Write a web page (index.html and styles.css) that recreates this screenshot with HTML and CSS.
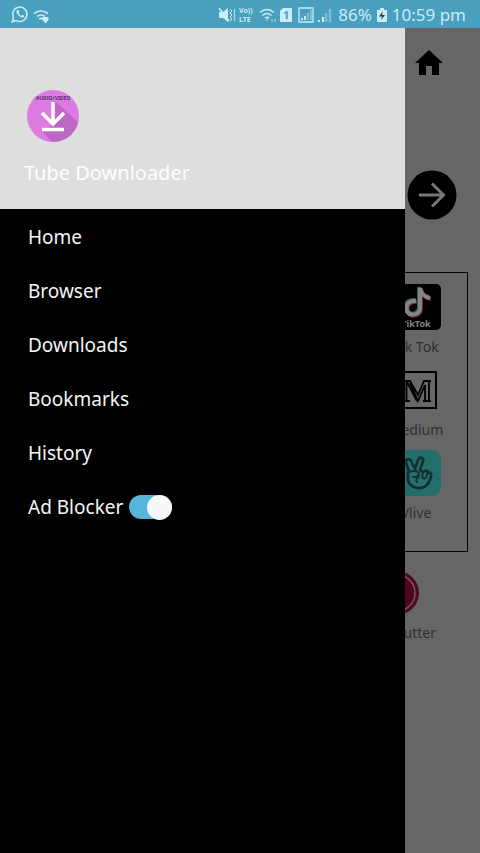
FILE: index.html
```html
<!DOCTYPE html>
<html lang="en">
<head>
<meta charset="utf-8">
<meta name="viewport" content="width=device-width, initial-scale=1">
<title>Tube Downloader</title>
<link rel="stylesheet" href="styles.css">
</head>
<body>
<header class="status">
  <svg class="status-left" width="40" height="20" viewBox="0 0 40 20" fill="none" stroke="currentColor" aria-hidden="true">
    <path d="M2.200 16.800 3.400 12.600A7.200 7.200 0 1 1 6.300 15.600Z" stroke-width="1.500"/>
    <path d="M7.300 5c-1.300.9-1.200 2.700.4 4.600s3.600 3.400 5.300 2.900c1.500-.5 1.600-1.700 1-2l-1.500-.7-1.200 1c-1.200-.5-2.200-1.500-2.700-2.600l.8-1-.7-2Z" fill="currentColor" stroke="none"/>
    <path d="M24 8.500q7-5 14 0M27 11.500q4-3 8 0M29 14q2-1.400 4 0" stroke-width="1.700"/>
    <path d="M32.500 12h6v3l-3 3.500-3-3.500Z" fill="currentColor" stroke="none"/>
  </svg>
  <div class="status-right">
    <svg width="116" height="20" viewBox="0 0 116 20" fill="none" stroke="currentColor" aria-hidden="true">
      <path d="M1 7h4l5-4v14l-5-4H1Z" fill="currentColor" stroke="none"/>
      <path d="m1 3 10 13" stroke-width="1.500"/>
      <path d="m12 4 2 2-2 2 2 2-2 2 2 2-2 2M16 4l1 2-1 2 1 2-1 2 1 2-1 2" stroke-width="1"/>
      <g fill="currentColor" stroke="none" class="lte"><text x="21" y="8">Vo))</text><text x="21" y="17">LTE</text></g>
      <path d="M42 7.500q7-6 14 0M44.500 10.500q4.500-4 9 0M47 13.300q2-1.800 4 0" stroke-width="1.600"/>
      <path d="M48 15h2M54 14v3m3-3v3" stroke-width="1.500" opacity=".5"/>
      <path d="M62 6l3-3h9v14H62Z" fill="currentColor" stroke="none"/>
      <text x="65" y="14" class="sim">1</text>
      <path d="M81 3h14v14H81Z" stroke-width="1.300"/>
      <path d="M84 15v-2m3 2v-4" stroke-width="2"/><path d="M90 15V8m3 7V5" stroke-width="2" opacity=".4"/>
      <path d="M101 17v-2m4 2v-5" stroke-width="2"/><path d="M108 17V8m4 9V4" stroke-width="2.500" opacity=".4"/>
    </svg>
    <span>86%</span>
    <svg width="12" height="16" viewBox="0 0 12 16" aria-hidden="true"><path d="M4 1h4v2h3v12H1V3h3Z" fill="currentColor"/><path d="M7 4 3 9.500h3L5 13l4-5H6Z" fill="#173f4e"/></svg>
    <time>10:59 pm</time>
  </div>
</header>
<div class="stage">
  <main class="page">
    <button class="plain home" aria-label="Home page">
      <svg width="30" height="28" viewBox="0 0 30 28" aria-hidden="true"><path d="M15 2 29 15h-4v12h-7v-9h-6v9H5V15H1Z"/></svg>
    </button>
    <button class="plain go" aria-label="Go">
      <svg width="50" height="50" viewBox="0 0 50 50" fill="none" aria-hidden="true"><circle cx="25" cy="25" r="24.500" fill="#000"/><path d="M12 25h24M25 13.500 36.500 25 25 36.500" stroke="#777" stroke-width="3"/></svg>
    </button>
    <section class="sites">
      <a href="#tiktok" class="tile">
        <svg width="46" height="46" viewBox="0 0 46 46" aria-hidden="true">
          <rect width="46" height="46" rx="5"/>
          <g fill="none" stroke-width="4"><path d="M21 17c-8-1-11 5-9 10 3 6 13 4 13-3V4c1 6 4 9 10 10" stroke="#276264" transform="translate(-1 -1)"/><path d="M21 17c-8-1-11 5-9 10 3 6 13 4 13-3V4c1 6 4 9 10 10" stroke="#742039" transform="translate(1 1)"/><path d="M21 17c-8-1-11 5-9 10 3 6 13 4 13-3V4c1 6 4 9 10 10" stroke="#858585"/></g>
          <text x="21" y="43" text-anchor="middle" class="tt">TikTok</text>
        </svg>
        <span>Tik Tok</span>
      </a>
      <a href="#medium" class="tile">
        <svg width="46" height="46" viewBox="0 0 46 46" fill="none" stroke="#000" aria-hidden="true"><rect x="5" y="5" width="36" height="36" stroke-width="2" fill="#676767"/><path d="M8 14h7l8 14 6-14h7M8 34h7M11.500 14v20M28 34h8M30 18v16M34 14v20M15 16l8 18 7-16M12 15l10 19" stroke-width="1.800"/></svg>
        <span>Medium</span>
      </a>
      <a href="#vlive" class="tile">
        <svg width="46" height="46" viewBox="0 0 46 46" aria-hidden="true"><rect width="46" height="46" rx="9" fill="#216e6b"/><g fill="#286f6c" stroke="#142e34" stroke-width="2.700" stroke-linejoin="round" stroke-linecap="round"><path d="M14 21 11 13c-1-4 4-5 5-2l4 8 3-9c2-4 6-2 5 1l-3 9 3 2 2-1c2-1 3 1 3 2 2-1 4 0 3 3-1 6-3 9-7 11-7 3-16-1-16-8v-5c0-2 0-3 1-3Z"/><path d="M14 22c4-2 9-1 10 1 1 3-3 4-6 4m6 0c-3 1-3 3-2 5M28 22l-1 5c2 3 5 1 5-3l1-1" fill="none" stroke-width="2"/></g></svg>
        <span>Vlive</span>
      </a>
    </section>
    <a href="#cutter" class="tile cutter">
      <svg width="46" height="46" viewBox="0 0 46 46" aria-hidden="true"><circle cx="23" cy="23" r="22" fill="#4d0b23"/><circle cx="23" cy="23" r="18" fill="#50051f" stroke="#7b5260" stroke-width="1.500"/></svg>
      <span>Cutter</span>
    </a>
  </main>
  <aside class="drawer">
    <div class="brand">
      <svg width="54" height="54" viewBox="0 0 54 54" aria-hidden="true">
        <defs><clipPath id="disc"><circle cx="27" cy="27" r="26"/></clipPath></defs>
        <g clip-path="url(#disc)"><path d="M0 0h54v54H0Z" fill="#dd7be3"/><path d="M29 12 54 35v19H27L16 42l13-7Z" fill="#bd68c4"/></g>
        <path d="M27 13v22M16 24l11 11 11-11M16 40.500h22" fill="none" stroke="#fff" stroke-width="3.500"/>
        <text x="27" y="11" text-anchor="middle" class="logo-text">AUDIO/VIDEO</text>
      </svg>
      <h1>Tube Downloader</h1>
    </div>
    <nav class="menu">
      <a href="#home">Home</a>
      <a href="#browser">Browser</a>
      <a href="#downloads">Downloads</a>
      <a href="#bookmarks">Bookmarks</a>
      <a href="#history">History</a>
      <label>Ad Blocker<input type="checkbox" role="switch" class="switch" checked></label>
    </nav>
  </aside>
</div>
</body>
</html>
```
FILE: styles.css
```css
* { box-sizing: border-box; }

body {
  margin: 0;
  min-height: 100vh;
  display: flex;
  flex-direction: column;
  background: #666;
  font-family: "Noto Sans", sans-serif;
}

svg { display: block; flex: none; }
a { color: inherit; text-decoration: none; }

.status {
  height: 28px;
  padding: 2px 14px 0 10px;
  display: flex;
  align-items: center;
  justify-content: space-between;
  background: #489fbe;
  color: #c9edf7;
  font-size: 17px;
  line-height: 26px;
  white-space: nowrap;
}
.status-right { display: flex; align-items: center; gap: 4px; }
.lte { font-size: 7px; font-weight: 700; }
.sim { font-size: 11px; font-weight: 700; fill: #489fbe; stroke: none; }

/* The drawer and the page share one grid cell. */
.stage { flex: 1; display: grid; }
.page, .drawer { grid-area: 1 / 1; }

.page {
  display: flex;
  flex-direction: column;
  align-items: flex-end;
  padding: 20px 12px;
  color: #303030;
}
.plain { padding: 0; border: 0; background: none; }
.home { margin-right: 24px; }
.go { margin: 94px 11px 0 0; }

.sites {
  align-self: stretch;
  display: flex;
  flex-direction: column;
  align-items: flex-end;
  gap: 10px;
  height: 280px;
  margin-top: 52px;
  padding-top: 11px;
  border: 1px solid #000;
}
.tile {
  width: 98px;
  display: flex;
  flex-direction: column;
  align-items: center;
  gap: 7px;
  font-size: 14px;
  line-height: 20px;
}
.tile span { margin-right: 4px; }
.tt { font-size: 9px; font-weight: 700; fill: #858585; }
.cutter { width: 64px; margin: 18px 28px 0 0; align-items: flex-start; }
.cutter span { align-self: flex-end; }
.cutter svg { margin-left: -2px; }

.drawer {
  z-index: 1;
  width: 84.375%;
  background: #000;
  color: #f5f5f5;
}
.brand {
  height: 181px;
  padding: 61px 24px 0;
  background: #dedede;
}
.brand svg { margin-left: 2px; }
.logo-text { font-size: 5px; font-weight: 700; fill: #582c65; }
h1 {
  margin: 15px 0 0;
  color: #fff;
  font-size: 20px;
  font-weight: 400;
  line-height: 30px;
}
.menu { display: flex; flex-direction: column; padding: 1px 28px; }
.menu a, .menu label {
  height: 54px;
  display: flex;
  align-items: center;
  gap: 6px;
  font-size: 19px;
  line-height: 28px;
}
.switch {
  appearance: none;
  display: flex;
  align-items: center;
  justify-content: flex-end;
  width: 43px;
  height: 24px;
  margin: 0;
  border-radius: 12px;
  background: #55b5dc;
}
.switch::before {
  content: "";
  width: 25px;
  height: 25px;
  flex: none;
  border-radius: 50%;
  background: #f8f8fb;
}
.switch:not(:checked) { justify-content: flex-start; background: #777; }
```
